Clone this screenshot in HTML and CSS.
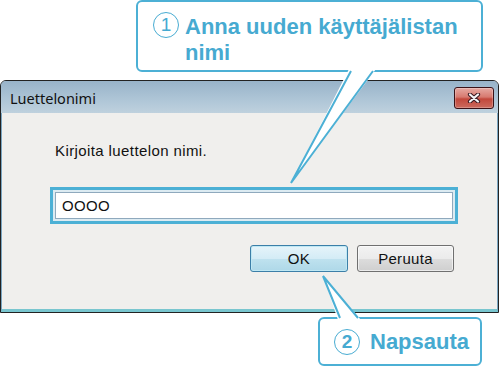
FILE: index.html
```html
<!DOCTYPE html>
<html lang="fi">
<head>
  <meta charset="UTF-8">
  <meta name="viewport" content="width=device-width, initial-scale=1">
  <title>Luettelonimi</title>
  <link rel="stylesheet" href="styles.css">
</head>
<body>

<div class="page">
  <div class="callout callout-top">
    <span class="num">1</span>
    <span class="callout-text">Anna uuden käyttäjälistan<br>nimi</span>
  </div>

  <div class="dialog">
    <div class="titlebar">
      <span class="title">Luettelonimi</span>
      <button class="close" aria-label="Sulje">
        <svg width="14" height="10" viewBox="0 0 14 10">
          <path d="M3 1.5 L11 8.5 M11 1.5 L3 8.5" stroke="#3b1a22" stroke-width="4.2" stroke-linecap="round"/>
          <path d="M3 1.5 L11 8.5 M11 1.5 L3 8.5" stroke="#f4f4f6" stroke-width="2.2" stroke-linecap="round"/>
        </svg>
      </button>
    </div>
    <div class="dialog-body">
      <p class="prompt">Kirjoita luettelon nimi.</p>
      <div class="focus-ring">
        <div class="field">OOOO</div>
      </div>
      <div class="actions">
        <button class="btn btn-default">OK</button>
        <button class="btn">Peruuta</button>
      </div>
    </div>
  </div>

  <div class="callout callout-bottom">
    <span class="num">2</span>
    <span class="callout-text">Napsauta</span>
  </div>

  <!-- callout tails, drawn over the dialog -->
  <svg class="tails" width="500" height="368" viewBox="0 0 500 368">
    <polygon points="349,69 291,183 376,69" fill="#fff"/>
    <path d="M351,71 L291,183 L373,71" fill="none" stroke="#4cb0d5" stroke-width="2" stroke-linejoin="miter"/>
    <polygon points="338,320 323,276 361,320" fill="#fff"/>
    <path d="M340,318 L323,276 L358,318" fill="none" stroke="#4cb0d5" stroke-width="2"/>
  </svg>
</div>

</body>
</html>
```

FILE: styles.css
```css
* { box-sizing: border-box; }
body {
  margin: 0;
  background-color: #fff;
  font-family: "Liberation Sans", Arial, sans-serif;
  color: #111;
}
.page {
  position: relative;
  width: 500px;
  height: 368px;
  overflow: hidden;
}

/* annotation callouts */
.callout {
  display: flex;
  align-items: flex-start;
  background-color: #fff;
  border: 2px solid #4cb0d5;
  border-radius: 6px;
  color: #46aad1;
  font-weight: bold;
  font-size: 22px;
  line-height: 26px;
}
.callout-top {
  margin-left: 136px;
  width: 347px;
  height: 72px;
  padding: 12px 0 0 15px;
  gap: 6px;
}
.callout-bottom {
  margin: 4px 0 0 318px;
  width: 164px;
  height: 49px;
  padding: 10px 0 0 14px;
  gap: 10px;
}
.num {
  flex: none;
  width: 26px;
  height: 26px;
  margin-top: -2px;
  border: 1.5px solid #48acd2;
  border-radius: 50%;
  font-size: 19px;
  font-weight: normal;
  line-height: 23px;
  text-align: center;
}
.callout-bottom .num { font-weight: bold; margin-top: 0; }

/* dialog window */
.dialog {
  margin-top: 8px;
  width: 499px;
  height: 233px;
  border: 1px solid #222;
  border-radius: 6px 6px 0 0;
  background-color: #c3d5e2;
}
.titlebar {
  display: flex;
  justify-content: space-between;
  align-items: flex-start;
  height: 32px;
  padding: 0 4px 0 9px;
  border-radius: 5px 5px 0 0;
  background: linear-gradient(#98b3c9, #afc6d7 60%, #bfd1de);
}
.title {
  font-family: "Noto Sans", sans-serif;
  font-size: 14.5px;
  line-height: 18px;
  padding-top: 8px;
  color: #111;
}
.close {
  width: 40px;
  height: 22px;
  margin-top: 6px;
  padding: 0;
  display: flex;
  align-items: center;
  justify-content: center;
  border: 1px solid #3b1217;
  border-radius: 3px;
  background: linear-gradient(#e6a9a2, #d77a70 45%, #c2483c 55%, #cb6a5e);
  box-shadow: inset 0 0 0 1px rgba(255,255,255,0.25);
}
.dialog-body {
  height: 199px;
  padding: 29px 0 0 48px;
  background-color: #f0efed;
  border-left: 1px solid #7aa6c2;
  border-right: 1px solid #7aa6c2;
  border-bottom: 3px solid #79c6cf;
}
.prompt {
  margin: 0;
  padding-left: 5px;
  font-size: 15px;
  line-height: 18px;
  letter-spacing: 0.4px;
}
.focus-ring {
  margin-top: 27px;
  width: 408px;
  height: 37px;
  padding: 2px;
  border: 3px solid #4cb0d5;
  background-color: #dcebf2;
}
.field {
  height: 27px;
  padding-left: 6px;
  border: 1px solid #8fa9bd;
  background-color: #fff;
  font-size: 15px;
  line-height: 25px;
  letter-spacing: 0.3px;
}
.actions {
  display: flex;
  justify-content: flex-end;
  gap: 9px;
  width: 408px;
  margin-top: 21px;
  padding-right: 4px;
}
.btn {
  width: 97px;
  height: 27px;
  padding: 0;
  font-family: "Liberation Sans", Arial, sans-serif;
  font-size: 15px;
  letter-spacing: 0.3px;
  color: #111;
  border: 1px solid #707070;
  border-radius: 3px;
  background: linear-gradient(#f3f3f3, #ebebeb 50%, #dddddd 50%, #cfcfcf);
  box-shadow: inset 0 0 0 1px rgba(255,255,255,0.6);
}
.btn-default {
  width: 98px;
  border-color: #3c7fa8;
  background: linear-gradient(#e6f4fa, #d4ecf6 50%, #bfe2ef 50%, #aed8e8);
  box-shadow: inset 0 0 0 1px #bfe8f4;
}

.tails {
  position: absolute;
  top: 0;
  left: 0;
  pointer-events: none;
}
```
